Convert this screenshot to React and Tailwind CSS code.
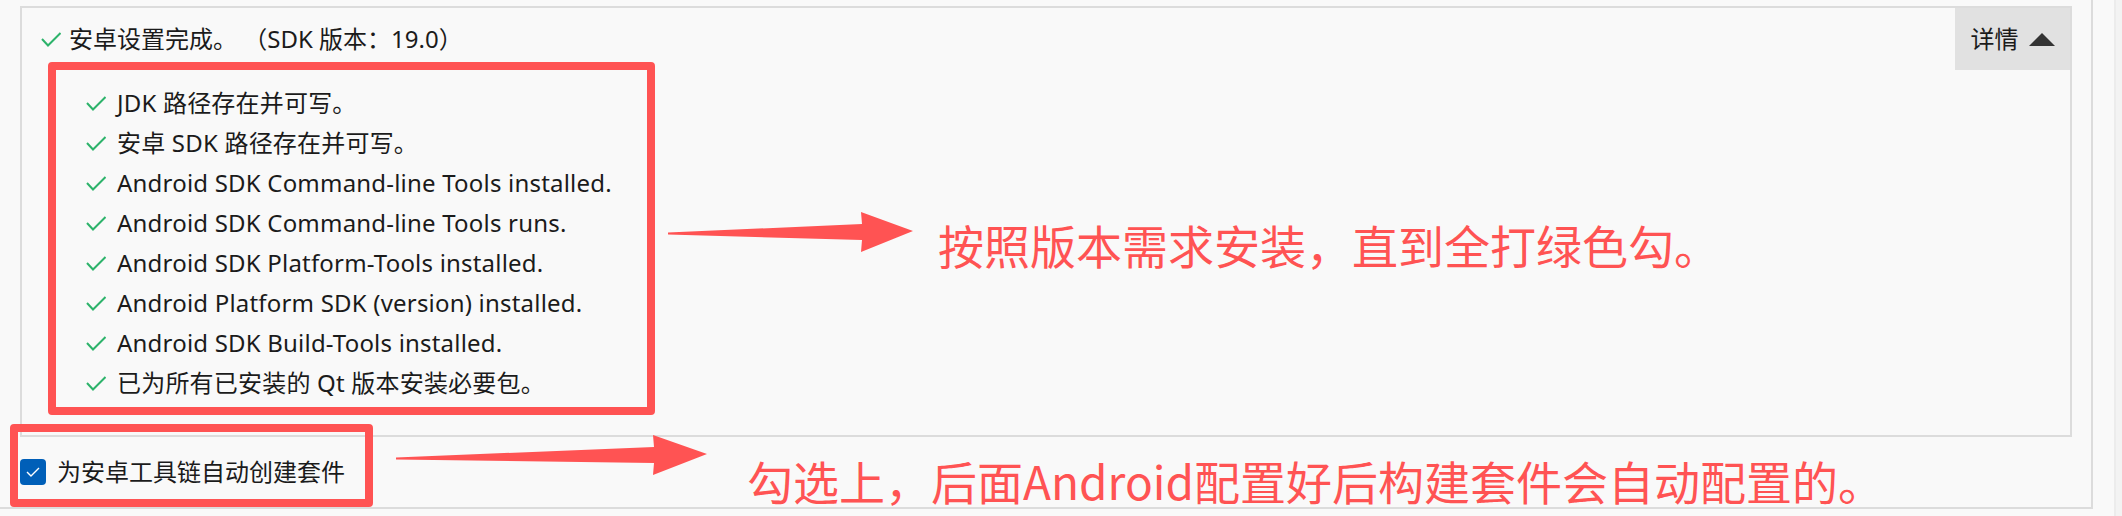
import React from 'react'

const FONT = { fontFamily: '"Noto Sans", "Noto Sans CJK SC", sans-serif' }

const ITEMS = [
  'JDK 路径存在并可写。',
  '安卓 SDK 路径存在并可写。',
  'Android SDK Command-line Tools installed.',
  'Android SDK Command-line Tools runs.',
  'Android SDK Platform-Tools installed.',
  'Android Platform SDK (version) installed.',
  'Android SDK Build-Tools installed.',
  '已为所有已安装的 Qt 版本安装必要包。',
]

function Check() {
  return (
    <svg width="20" height="15" viewBox="0 0 20 15" className="shrink-0">
      <polyline points="1,7 7,13.5 19.5,1" fill="none" stroke="#2db36b" strokeWidth="2" />
    </svg>
  )
}

export default function App() {
  return (
    <div className="relative w-[2122px] h-[516px] overflow-hidden bg-[#f9f9f9] text-[#1b1b1b] flex" style={FONT}>
      {/* 外框 */}
      <div className="w-[2093px] h-[509px] border-r-2 border-b-2 border-[#dcdcdc] pl-[20px] pt-[6px] pr-[19px] flex flex-col">
        {/* 详情面板 */}
        <div className="h-[431px] border-2 border-[#dcdcdc] flex flex-col">
          <div className="h-[62px] flex items-center justify-between">
            <div className="flex items-center gap-[8px] pl-[19px] text-[24px]">
              <Check />
              <span>安卓设置完成。 （SDK 版本：19.0）</span>
            </div>
            <div className="h-full w-[115px] bg-[#e1e1e1] flex items-center justify-center gap-[10px] text-[24px]">
              <span>详情</span>
              <span className="w-0 h-0 border-l-[13px] border-r-[13px] border-b-[13px] border-l-transparent border-r-transparent border-b-[#333333]" />
            </div>
          </div>
          <ul className="pl-[64px] pt-[13px]">
            {ITEMS.map((t) => (
              <li key={t} className="h-[40px] flex items-center gap-[11px] text-[24px] tracking-[0.2px]">
                <Check />
                <span>{t}</span>
              </li>
            ))}
          </ul>
        </div>
        {/* 复选框 */}
        <div className="flex-1 flex items-center gap-[11px] text-[24px]">
          <span className="w-[26px] h-[26px] rounded-[4px] bg-[#005fb8] flex items-center justify-center">
            <svg width="14" height="10" viewBox="0 0 14 10">
              <polyline points="1,5 5,9 13,1" fill="none" stroke="#ffffff" strokeWidth="1.4" />
            </svg>
          </span>
          <span>为安卓工具链自动创建套件</span>
        </div>
      </div>
      <div className="ml-[21px] h-full border-l-2 border-[#ececec] flex-1 bg-[#f3f3f3]" />

      {/* 标注 */}
      <div className="absolute left-[48px] top-[62px] w-[607px] h-[353px] border-[8px] border-[#ff5353] rounded-[4px]" />
      <div className="absolute left-[10px] top-[424px] w-[363px] h-[83px] border-[8px] border-[#ff5353] rounded-[4px]" />

      <svg className="absolute left-[668px] top-[210px]" width="248" height="44" viewBox="0 0 248 44">
        <polygon points="0,22.5 194,14 193,2 245,21 193,42 194,30 0,24.5" fill="#ff5353" />
      </svg>
      <svg className="absolute left-[396px] top-[433px]" width="314" height="44" viewBox="0 0 314 44">
        <polygon points="0,24.5 258,14 257,2 311,21 257,42 258,30 0,26.5" fill="#ff5353" />
      </svg>

      <div className="absolute left-[938px] top-[216px] text-[46px] leading-[56px] text-[#ff5353]" style={{ fontFamily: '"Noto Sans CJK SC", sans-serif' }}>
        按照版本需求安装，直到全打绿色勾。
      </div>
      <div className="absolute left-[747px] top-[452px] text-[46px] leading-[56px] text-[#ff5353]" style={{ fontFamily: '"Noto Sans CJK SC", sans-serif' }}>
        勾选上，后面Android配置好后构建套件会自动配置的。
      </div>
    </div>
  )
}
